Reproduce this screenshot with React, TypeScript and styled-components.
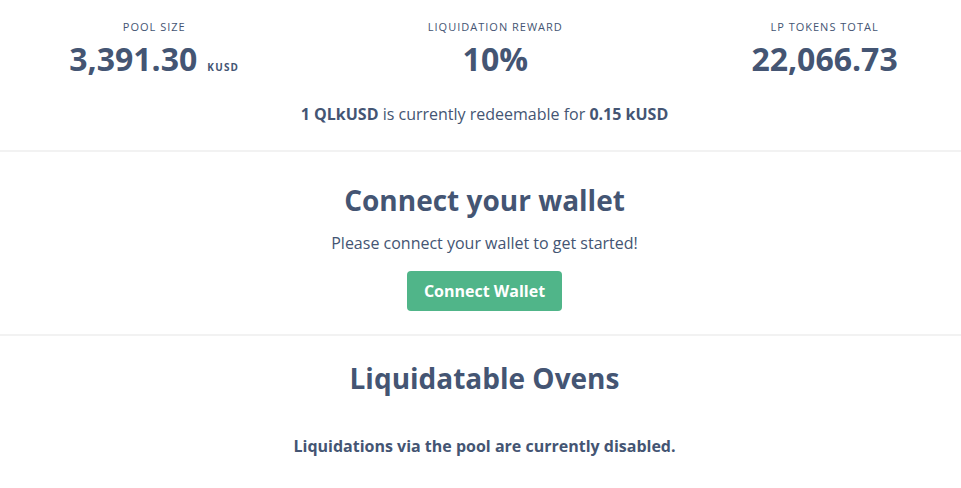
import styled, { createGlobalStyle } from "styled-components";

const GlobalStyle = createGlobalStyle`
  body {
    margin: 0;
    background: #fff;
    font-family: "Open Sans", "Noto Sans", sans-serif;
    color: #445573;
  }
`;

const stats = [
  { label: "Pool Size", value: "3,391.30", unit: "kUSD" },
  { label: "Liquidation Reward", value: "10%" },
  { label: "LP Tokens Total", value: "22,066.73" },
];

const App = () => {
  return (
    <Page>
      <GlobalStyle />
      <StatsSection>
        <StatsRow>
          {stats.map((s) => (
            <Stat key={s.label}>
              <StatLabel>{s.label}</StatLabel>
              <StatValue>
                {s.value}
                {s.unit && <Unit>{s.unit}</Unit>}
              </StatValue>
            </Stat>
          ))}
        </StatsRow>
        <Redeem>
          <b>1 QLkUSD</b> is currently redeemable for <b>0.15 kUSD</b>
        </Redeem>
      </StatsSection>
      <Section>
        <Heading>Connect your wallet</Heading>
        <Text>Please connect your wallet to get started!</Text>
        <Button>Connect Wallet</Button>
      </Section>
      <Section $last>
        <Heading>Liquidatable Ovens</Heading>
        <Notice>Liquidations via the pool are currently disabled.</Notice>
      </Section>
    </Page>
  );
};

const Page = styled.div`
  width: 100%;
  min-height: 488px;
  overflow: hidden;
`;

const StatsSection = styled.section`
  padding: 18px 0 24px 8px;
  border-bottom: 2px solid #f2f2f2;
  text-align: center;
`;

const StatsRow = styled.div`
  display: flex;
  margin: 0 -31px 0 -33px;
`;

const Stat = styled.div`
  flex: 1 1 auto;
  display: flex;
  flex-direction: column;
  align-items: center;
`;

const StatLabel = styled.p`
  margin: 0;
  font-size: 11px;
  line-height: 18px;
  letter-spacing: 1px;
  text-transform: uppercase;
`;

const StatValue = styled.p`
  margin: 3px 0 0;
  font-size: 32px;
  font-weight: 700;
  line-height: 40px;
  white-space: nowrap;
`;

const Unit = styled.span`
  margin-left: 10px;
  font-size: 10px;
  font-weight: 700;
  letter-spacing: 1.2px;
  text-transform: uppercase;
`;

const Redeem = styled.p`
  margin: 15px 0 0;
  font-size: 16px;
  line-height: 24px;

  b {
    font-weight: 700;
  }
`;

const Section = styled.section<{ $last?: boolean }>`
  display: flex;
  flex-direction: column;
  align-items: center;
  padding: ${(p) => (p.$last ? "22px 0 30px 8px" : "28px 0 23px 8px")};
  border-bottom: ${(p) => (p.$last ? "none" : "2px solid #f2f2f2")};
`;

const Heading = styled.h2`
  margin: 0;
  font-size: 28px;
  font-weight: 700;
  line-height: 40px;
`;

const Text = styled.p`
  margin: 11px 0 0;
  font-size: 16px;
  line-height: 24px;
`;

const Button = styled.button`
  margin-top: 16px;
  height: 40px;
  padding: 0 17px;
  border: none;
  border-radius: 4px;
  background: #50b589;
  color: #fff;
  font-family: inherit;
  font-size: 16px;
  font-weight: 700;
  cursor: pointer;
`;

const Notice = styled.p`
  margin: 36px 0 0;
  font-size: 16px;
  font-weight: 700;
  line-height: 24px;
`;

export default App;
